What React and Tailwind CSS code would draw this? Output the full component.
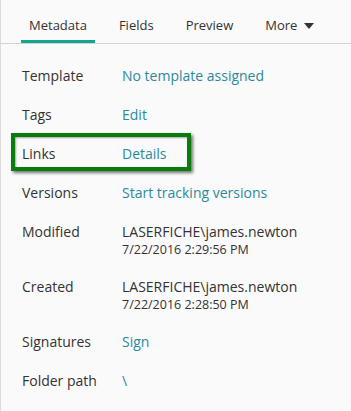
import React from 'react';

const tabs = ['Metadata', 'Fields', 'Preview'];

const Row = ({ label, children, highlight }) => (
    <div className="relative flex">
        <div className="w-[100px] shrink-0 text-[#333]">{label}</div>
        <div>{children}</div>
        {highlight && (
            <div className="absolute left-[-11px] top-[-11px] w-[180px] h-[38px] border-[4px] border-[#0a7c0e] shadow-[2px_2px_3px_rgba(0,0,0,0.55),inset_1px_1px_2px_rgba(0,0,0,0.35)]" />
        )}
    </div>
);

const Link = ({ children }) => <span className="text-[#2a8a9c]">{children}</span>;

const App = () => {
    return (
        <div className="w-[351px] h-[411px] bg-[#fafafa] border-l border-[#dcdcdc] overflow-hidden text-[14px] leading-[20px]" style={{ fontFamily: '"Open Sans", sans-serif' }}>
            <div className="flex h-[44px] border-b border-[#d2d2d2] pl-[20px] gap-[16px] text-[13px] text-[#333]">
                {tabs.map((t, i) => (
                    <div key={t} className={`px-[8px] pt-[15px] ${i === 0 ? 'border-b-[3px] border-[#14a68a]' : ''}`}>
                        {t}
                    </div>
                ))}
                <div className="flex items-start gap-[7px] px-[8px] pt-[15px]">
                    <span>More</span>
                    <svg width="10" height="6" viewBox="0 0 10 6" className="mt-[8px]">
                        <path d="M0 0 L10 0 L5 6 Z" fill="#333" />
                    </svg>
                </div>
            </div>
            <div className="flex flex-col gap-[19px] pl-[21px] pt-[22px]">
                <Row label="Template"><Link>No template assigned</Link></Row>
                <Row label="Tags"><Link>Edit</Link></Row>
                <Row label="Links" highlight><Link>Details</Link></Row>
                <Row label="Versions"><Link>Start tracking versions</Link></Row>
                <Row label="Modified">
                    <div className="text-[#333]">LASERFICHE\james.newton</div>
                    <div className="text-[12.5px] leading-[16px] text-[#333]">7/22/2016 2:29:56 PM</div>
                </Row>
                <Row label="Created">
                    <div className="text-[#333]">LASERFICHE\james.newton</div>
                    <div className="text-[12.5px] leading-[16px] text-[#333]">7/22/2016 2:28:50 PM</div>
                </Row>
                <Row label="Signatures"><Link>Sign</Link></Row>
                <Row label="Folder path"><Link>\</Link></Row>
            </div>
        </div>
    );
};

export default App;
